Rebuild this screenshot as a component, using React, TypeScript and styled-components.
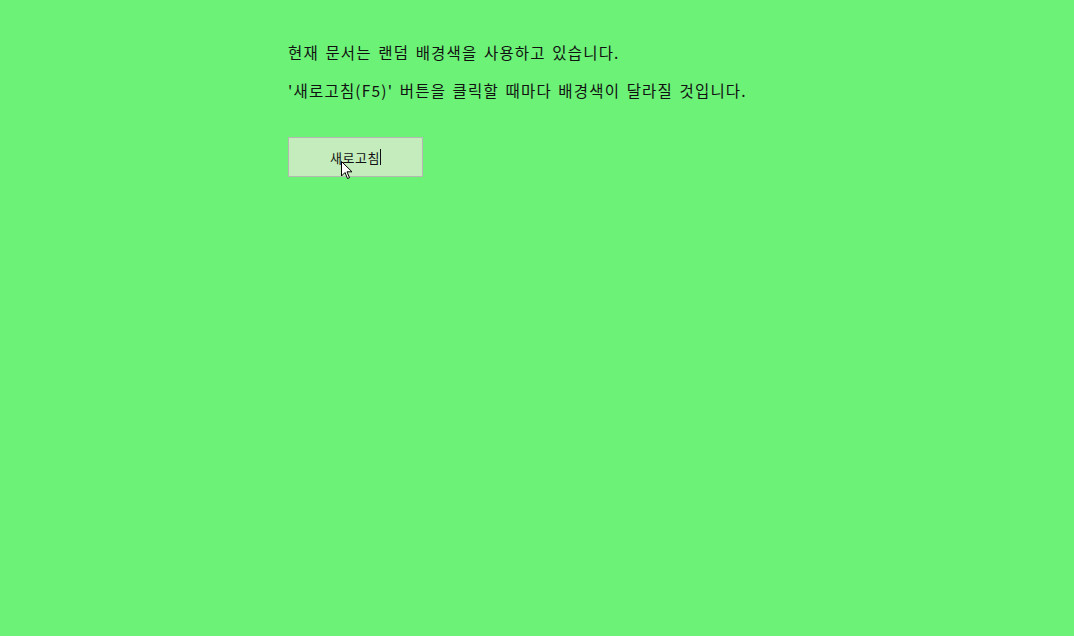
import React from 'react';
import styled, { createGlobalStyle } from 'styled-components';

const GlobalStyle = createGlobalStyle`
  html, body {
    margin: 0;
    padding: 0;
    background-color: #6bf277;
    font-family: "Noto Sans CJK KR", "Noto Sans", sans-serif;
    color: #111;
  }
`;

const Page = styled.main`
  min-height: 636px;
  padding: 40px 0 0 288px;
  box-sizing: border-box;
`;

const Line = styled.p`
  margin: 0 0 14px;
  font-size: 15.5px;
  letter-spacing: 1.2px;
  word-spacing: 1.8px;
  line-height: 24px;
`;

const RefreshButton = styled.button`
  position: relative;
  margin-top: 35px;
  width: 135px;
  height: 40px;
  background-color: #c4ecbc;
  border: 1px solid #b3b8b1;
  font-family: inherit;
  font-size: 13px;
  letter-spacing: 0.6px;
  color: #111;
  display: flex;
  align-items: center;
  justify-content: center;
  padding: 0;
`;

const Caret = styled.span`
  display: inline-block;
  width: 1px;
  height: 16px;
  background: #111;
  vertical-align: middle;
`;

const Pointer = styled.svg`
  position: absolute;
  left: 52px;
  top: 23px;
`;

export default function App() {
  return (
    <>
      <GlobalStyle />
      <Page>
        <Line>현재 문서는 랜덤 배경색을 사용하고 있습니다.</Line>
        <Line>'새로고침(F5)' 버튼을 클릭할 때마다 배경색이 달라질 것입니다.</Line>
        <RefreshButton type="button">
          새로고침<Caret />
          <Pointer width="12" height="19" viewBox="0 0 12 19">
            <path d="M0.5 0.5 L0.5 15 L4 11.5 L6.5 17.5 L8.5 16.7 L6 10.8 L11 10.8 Z" fill="#fff" stroke="#000" strokeWidth="1" />
          </Pointer>
        </RefreshButton>
      </Page>
    </>
  );
}
